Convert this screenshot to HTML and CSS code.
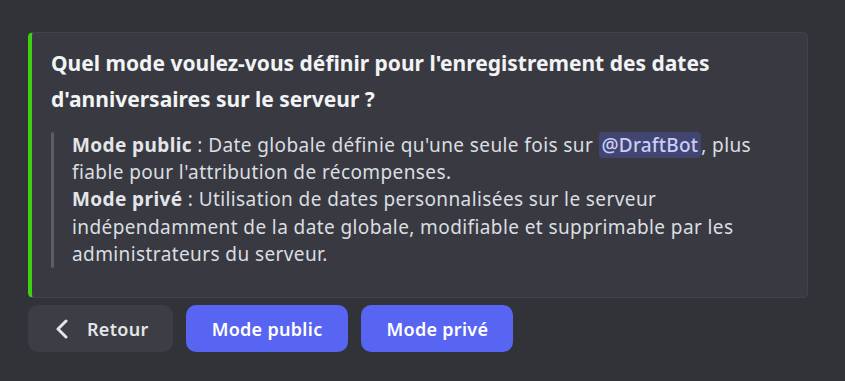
FILE: index.html
```html
<!DOCTYPE html>
<html>
<head>
  <meta charset="UTF-8">
  <link rel="stylesheet" href="styles.css">
</head>
<body>
  <div class="message">
    <div class="embed">
      <div class="embed-title">Quel mode voulez-vous définir pour l'enregistrement des dates d'anniversaires sur le serveur ?</div>
      <div class="embed-description">
        <div class="quote-bar"></div>
        <div class="quote-text">
          <strong>Mode public</strong> : Date globale définie qu'une seule fois sur <span class="mention">@DraftBot</span>, plus fiable pour l'attribution de récompenses.<br>
          <strong>Mode privé</strong> : Utilisation de dates personnalisées sur le serveur indépendamment de la date globale, modifiable et supprimable par les administrateurs du serveur.
        </div>
      </div>
    </div>

    <div class="actions">
      <button class="button button-secondary">
        <svg class="icon" width="14" height="20" viewBox="0 0 14 20">
          <path d="M11 2 L3 10 L11 18" fill="none" stroke="currentColor" stroke-width="3" stroke-linecap="round" stroke-linejoin="round"/>
        </svg>
        <span>Retour</span>
      </button>
      <button class="button button-primary">Mode public</button>
      <button class="button button-primary">Mode privé</button>
    </div>
  </div>
</body>
</html>
```

FILE: styles.css
```css
* {
  margin: 0;
  padding: 0;
  box-sizing: border-box;
}

body {
  background: #313338;
  font-family: 'Noto Sans', 'Open Sans', sans-serif;
  color: #dbdee1;
}

.message {
  padding: 32px 0 0 28px;
  width: 808px;
}

.embed {
  background: #393a41;
  border: 1px solid #42434a;
  border-left: 4px solid #3fd00f;
  border-radius: 5px;
  padding: 12px 20px 29px 19px;
}

.embed-title {
  font-size: 21px;
  font-weight: 700;
  line-height: 36px;
  color: #f2f3f5;
}

.embed-description {
  display: flex;
  margin-top: 15px;
}

.quote-bar {
  width: 3px;
  border-radius: 2px;
  background: #5c5e66;
  flex-shrink: 0;
}

.quote-text {
  padding: 0 0 0 18px;
  font-size: 19px;
  line-height: 27.2px;
  letter-spacing: 0.4px;
  max-width: 718px;
}

.quote-text strong {
  font-weight: 700;
  color: #e3e5e8;
}

.mention {
  background: rgba(88, 101, 242, 0.26);
  color: #c9cdfb;
  border-radius: 4px;
  padding: 0 3px;
  letter-spacing: 0.2px;
  font-weight: 500;
}

.actions {
  display: flex;
  gap: 13px;
  margin-top: 7px;
}

.button {
  height: 47px;
  border: none;
  border-radius: 10px;
  font-family: 'Noto Sans', 'Open Sans', sans-serif;
  font-size: 18px;
  font-weight: 600;
  letter-spacing: 0.3px;
  color: #ffffff;
  padding: 0 26px;
  display: flex;
  align-items: center;
  cursor: pointer;
}

.button-primary {
  background: #5865f2;
}

.button-primary + .button-primary {
  padding: 0 25px;
}

.button-secondary {
  background: #3d3e45;
  color: #e3e5e8;
  gap: 18px;
  padding: 0 24px 0 27px;
}

.icon {
  display: block;
}
```
